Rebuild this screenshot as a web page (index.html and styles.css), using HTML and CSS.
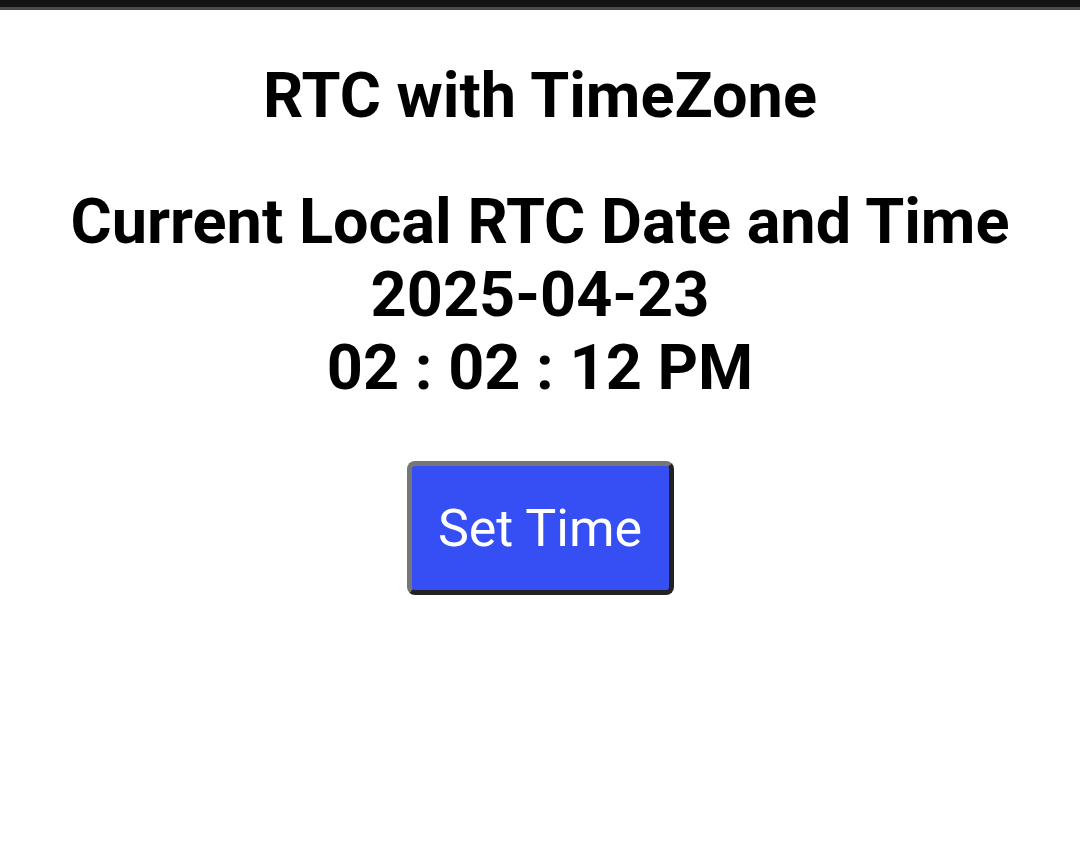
FILE: index.html
```html
<!DOCTYPE html>
<html>
<head>
<meta charset="utf-8">
<link rel="stylesheet" href="styles.css">
</head>
<body>
<div class="topbar"></div>
<main class="page">
  <h1 class="title">RTC with TimeZone</h1>
  <h2 class="clock">Current Local RTC Date and Time<br>2025-04-23<br>02 : 02 : 12 PM</h2>
  <button class="set-btn">Set Time</button>
</main>
</body>
</html>
```
FILE: styles.css
```css
html, body {
  margin: 0;
  padding: 0;
  background: #ffffff;
}
body {
  font-family: Roboto, "Noto Sans", sans-serif;
  color: #000;
}
.topbar {
  height: 7px;
  background: #131313;
  border-bottom: 3px solid #4a4a4a;
}
.page {
  display: flex;
  flex-direction: column;
  align-items: center;
  text-align: center;
}
.title {
  font-size: 63px;
  font-weight: 700;
  line-height: 74px;
  margin: 49px 0 0 0;
}
.clock {
  font-size: 63px;
  font-weight: 700;
  line-height: 73px;
  margin: 52px 0 0 0;
}
.set-btn {
  margin-top: 57px;
  width: 267px;
  height: 134px;
  background: #364ff5;
  color: #fff;
  font-family: Roboto, sans-serif;
  font-size: 52px;
  font-weight: 400;
  border-width: 5px;
  border-style: solid;
  border-color: #767676 #222 #222 #767676;
  border-radius: 8px;
  padding: 0;
}
```
